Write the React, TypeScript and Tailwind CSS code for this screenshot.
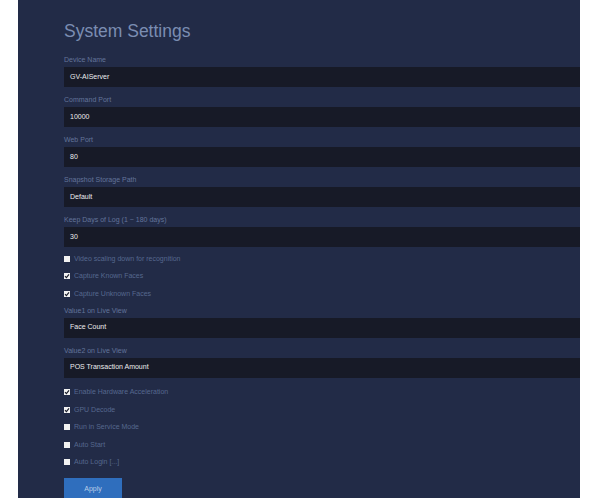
const FIELDS_A = [
  { label: "Device Name", value: "GV-AIServer" },
  { label: "Command Port", value: "10000" },
  { label: "Web Port", value: "80" },
  { label: "Snapshot Storage Path", value: "Default" },
  { label: "Keep Days of Log (1 ~ 180 days)", value: "30" },
];

const CHECKS_A = [
  { label: "Video scaling down for recognition", checked: false },
  { label: "Capture Known Faces", checked: true },
  { label: "Capture Unknown Faces", checked: true },
];

const FIELDS_B = [
  { label: "Value1 on Live View", value: "Face Count" },
  { label: "Value2 on Live View", value: "POS Transaction Amount" },
];

const CHECKS_B = [
  { label: "Enable Hardware Acceleration", checked: true },
  { label: "GPU Decode", checked: true },
  { label: "Run in Service Mode", checked: false },
  { label: "Auto Start", checked: false },
  { label: "Auto Login [...]", checked: false },
];

function Field({ label, value }: { label: string; value: string }) {
  return (
    <div className="mb-[6px]">
      <div className="h-[14px] leading-[14px] text-[7px] text-[#63749a]">{label}</div>
      <div className="h-[20px] bg-[#171a27] pl-[6px] flex items-center text-[7px] text-[#ececee]">
        {value}
      </div>
    </div>
  );
}

function Check({ label, checked }: { label: string; checked: boolean }) {
  return (
    <div className="h-[17.5px] flex items-center gap-[4px]">
      <span className="w-[6px] h-[6px] bg-[#f2f2f2] flex items-center justify-center">
        {checked && (
          <svg viewBox="0 0 6 6" className="w-[6px] h-[6px]">
            <path d="M1 3.2 L2.4 4.6 L5 1.4" fill="none" stroke="#1a1d2a" strokeWidth="1.2" />
          </svg>
        )}
      </span>
      <span className="text-[7px] text-[#56688e]">{label}</span>
    </div>
  );
}

export default function App() {
  return (
    <div className="w-[597px] h-[502px] bg-white font-['Liberation_Sans',Arial,sans-serif]">
      <div className="ml-[18px] w-[562px] h-[498px] overflow-hidden bg-[#222b47] pl-[46px] pt-[21px]">
        <h1 className="h-[20px] leading-[20px] text-[17.5px] text-[#7b8db2] mb-[12px]">System Settings</h1>

        {FIELDS_A.map((f) => (
          <Field key={f.label} {...f} />
        ))}

        <div className="-mt-[3px] pb-[1px]">
          {CHECKS_A.map((c) => (
            <Check key={c.label} {...c} />
          ))}
        </div>

        {FIELDS_B.map((f) => (
          <Field key={f.label} {...f} />
        ))}

        <div>
          {CHECKS_B.map((c) => (
            <Check key={c.label} {...c} />
          ))}
        </div>

        <button className="mt-[7px] w-[58px] h-[22px] bg-[#2f6ebd] text-[7px] text-[#b9cde9]">
          Apply
        </button>
      </div>
    </div>
  );
}
